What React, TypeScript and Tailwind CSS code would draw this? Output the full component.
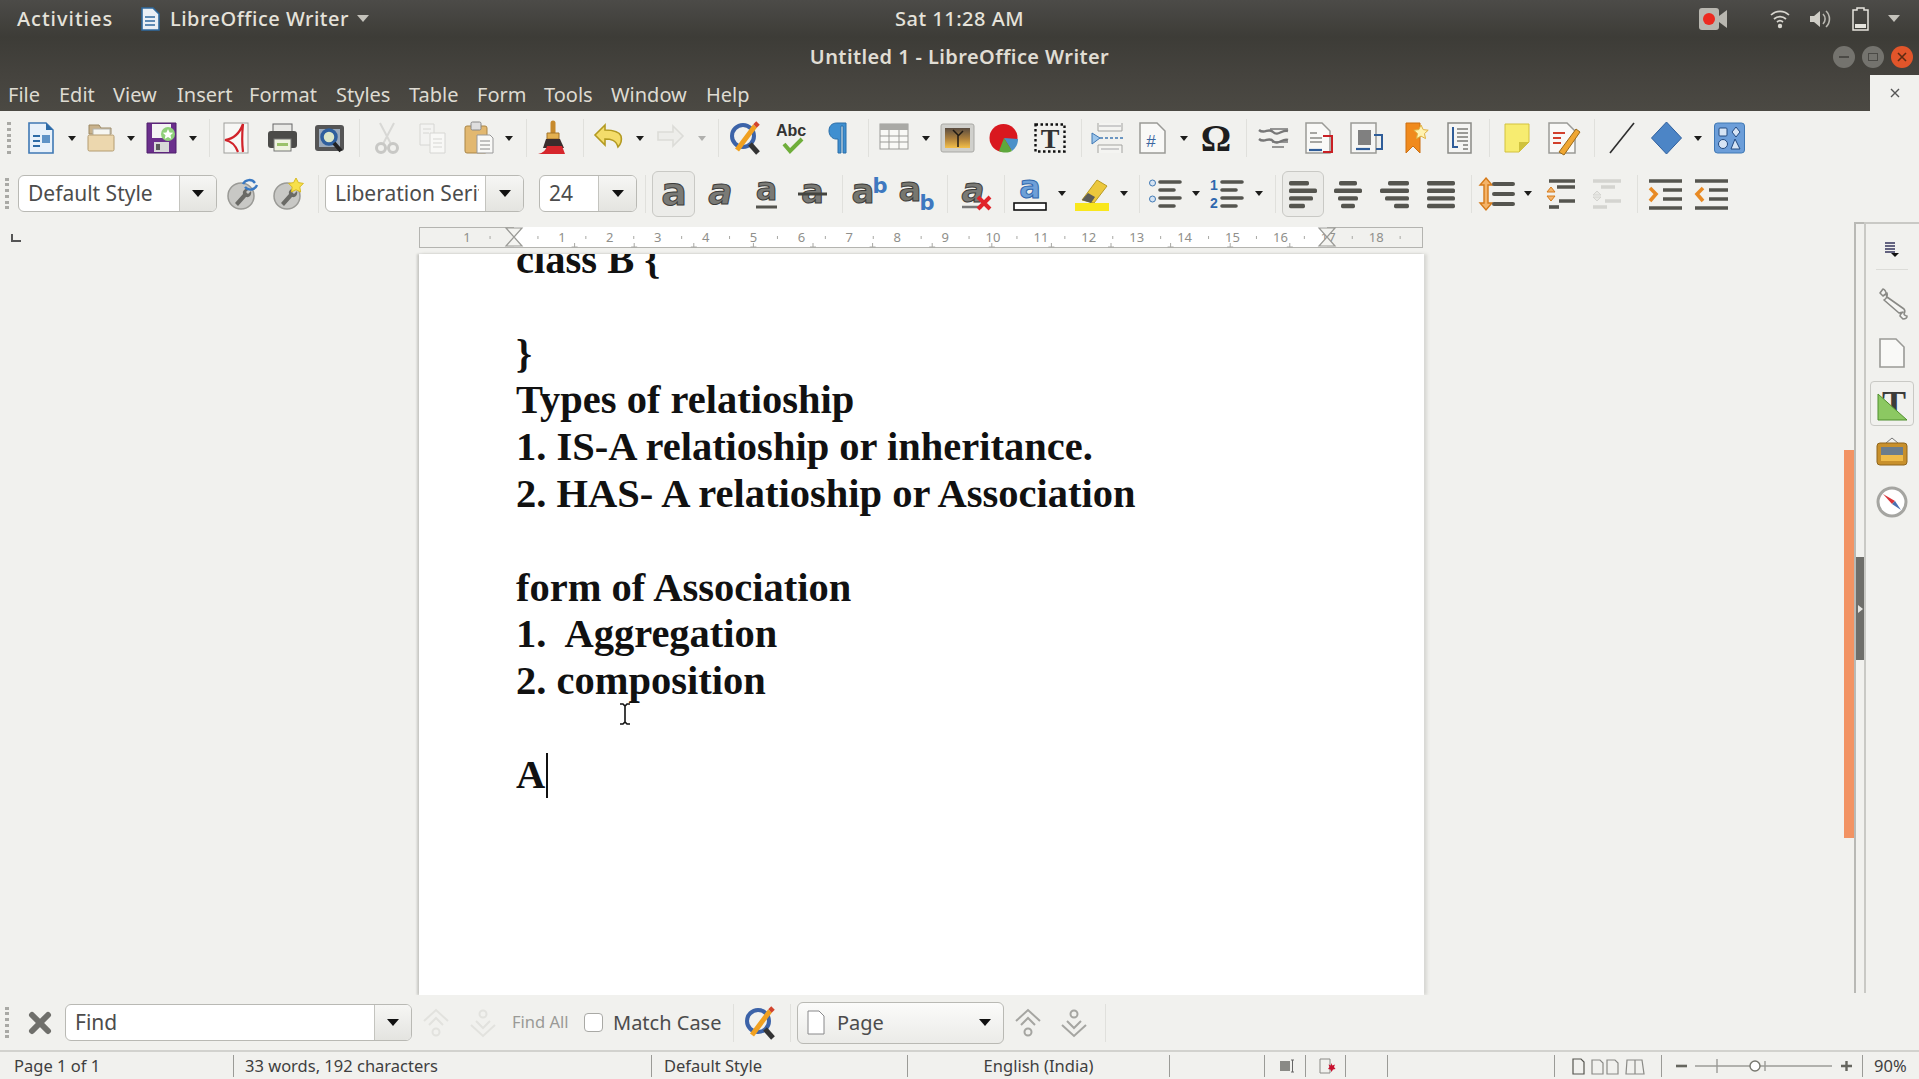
import React from 'react';

type P = { className?: string };

const Arrow = ({ className = '' }: P) => (
  <svg viewBox="0 0 8 5" className={`shrink-0 w-[8px] h-[5px] ${className}`}>
    <path d="M0 0h8L4 5z" fill="#1d1d1b" />
  </svg>
);

const Sep = ({ className = '' }: P) => <div className={`shrink-0 w-px h-[38px] bg-[#e0e0dc] ${className}`} />;

const Grip = ({ className = '' }: P) => (
  <div className={`shrink-0 w-[4px] h-[32px] flex flex-col justify-between ${className}`}>
    {[0, 1, 2, 3, 4, 5].map((i) => (
      <div key={i} className="h-[3px] w-[4px] bg-[#a9a9a5]" />
    ))}
  </div>
);

const Combo = ({ text, className = '', split }: { text: string; className?: string; split: string }) => (
  <div className={`shrink-0 h-[37px] flex rounded-[6px] border border-[#b9b9b4] bg-white overflow-hidden ${className}`}>
    <div className="flex-1 min-w-0 ml-[9px] mr-[6px] text-[21px] leading-[35px] text-[#4c4c4c] overflow-hidden whitespace-nowrap">{text}</div>
    <div className={`${split} shrink-0 flex items-center justify-center border-l border-[#c4c4bf] bg-gradient-to-b from-[#f6f6f4] to-[#e4e4e0]`}>
      <svg viewBox="0 0 12 7" className="w-[12px] h-[7px]"><path d="M0 0h12L6 7z" fill="#111" /></svg>
    </div>
  </div>
);

const Lines = ({ w, rows, dim }: { w: number; rows: [number, number][]; dim?: boolean }) => (
  <svg viewBox={`0 0 ${w} 32`} className="shrink-0 h-[32px]" width={w}>
    {rows.map(([x, l], i) => (
      <rect key={i} x={x} y={3 + i * 7.6} width={l} height={4.4} rx={1.6} fill={dim ? '#cfcfcb' : '#55554f'} />
    ))}
  </svg>
);

const LetterA = ({ w, italic, size = 32, y = 24 }: { w: number; italic?: boolean; size?: number; y?: number }) => (
  <text x={w / 2} y={y} textAnchor="middle" fontFamily="'DejaVu Sans', sans-serif" fontWeight="700" fontSize={size} fontStyle={italic ? 'italic' : 'normal'} fill="#7a7a76" stroke="#3c3c3a" strokeWidth="1">a</text>
);

const Svg = ({ w, className = '', children }: { w: number; className?: string; children: React.ReactNode }) => (
  <svg viewBox={`0 0 ${w} 34`} width={w} height={34} className={`shrink-0 overflow-visible ${className}`}>{children}</svg>
);

const FindGlass = ({ className = '' }: P) => (
  <Svg w={33} className={className}>
    <circle cx="14" cy="15" r="11" fill="none" stroke="#3c63a8" strokeWidth="4" />
    <path d="M21 23l8 9" stroke="#333" strokeWidth="5" />
    <path d="M8 29L26 5" stroke="#f0a020" strokeWidth="5" />
    <path d="M26 5l3-3" stroke="#d2442c" strokeWidth="5" />
  </Svg>
);

const DocBase = ({ w = 30 }: { w?: number }) => (
  <path d={`M2 2h${w - 10}l8 8v22H2z`} fill="#f9f9f7" stroke="#9a9a96" strokeWidth="1.5" />
);

const UpDouble = ({ down, dim, className = '' }: { down?: boolean; dim?: boolean; className?: string }) => (
  <svg viewBox="0 0 28 30" width={28} height={30} className={`shrink-0 ${className}`}>
    <g fill="none" stroke={dim ? '#e2e2de' : '#a5a5a1'} strokeWidth="2" transform={down ? 'rotate(180 14 15)' : undefined}>
      <path d="M2 13L14 2l12 11" />
      <path d="M7 17l7-7 7 7" />
      <circle cx="14" cy="24" r="3.5" />
    </g>
  </svg>
);

const menus: [string, string][] = [
  ['File', 'w-[51px]'],
  ['Edit', 'w-[54px]'],
  ['View', 'w-[64px]'],
  ['Insert', 'w-[72px]'],
  ['Format', 'w-[87px]'],
  ['Styles', 'w-[73px]'],
  ['Table', 'w-[68px]'],
  ['Form', 'w-[67px]'],
  ['Tools', 'w-[67px]'],
  ['Window', 'w-[95px]'],
  ['Help', 'w-[50px]'],
];

const docLines = [
  'class B {',
  '',
  '}',
  'Types of relatioship',
  '1. IS-A relatioship or inheritance.',
  '2. HAS- A relatioship or Association',
  '',
  'form of Association',
  '1.  Aggregation',
  '2. composition',
  '',
];

const Ruler = () => {
  const nums: number[] = [];
  for (let i = 1; i <= 18; i++) nums.push(i);
  const zero = 95;
  return (
    <svg viewBox="0 0 1004 21" width={1004} height={21} className="block">
      <rect x="0.5" y="0.5" width="1003" height="20" fill="#f1f1ee" stroke="#b4b4b0" />
      <rect x={zero} y="0" width="813" height="20" fill="#fff" />
      <g fontFamily="'Noto Sans', sans-serif" fontSize="13" fill="#8f8f8b" textAnchor="middle">
        <text x={zero - 47} y="15">1</text>
        {nums.map((n) => (
          <text key={n} x={zero + n * 47.9} y="15">{n}</text>
        ))}
      </g>
      <g stroke="#a8a8a4">
        {[-1, 0, ...nums].map((n) => (
          <path key={n} d={`M${zero + (n + 0.5) * 47.9} 9v3`} />
        ))}
        {[1, 2, 3, 4, 5, 6, 7, 8, 9, 10, 11, 12, 13].map((n) => (
          <path key={n} d={`M${zero + n * 59.6 + 1} 16v4M${zero + n * 59.6 - 2} 20h6`} />
        ))}
      </g>
      <path d={`M${zero - 8} 1h16l-8 9 8 9h-16l8-9z`} fill="#f4f4f1" stroke="#9a9a96" strokeWidth="1.2" />
      <path d={`M${zero + 813 - 8} 1h16l-8 9 8 9h-16l8-9z`} fill="#f4f4f1" stroke="#9a9a96" strokeWidth="1.2" />
    </svg>
  );
};

const Toolbar1 = () => (
  <div className="h-[54px] flex items-center bg-[#f1f1ee]">
    <Grip className="ml-[7px]" />
    <Svg w={26} className="ml-[17px]">
      <path d="M1 2h17l7 7v23H1z" fill="#e8f1fa" stroke="#3f78b4" strokeWidth="1.6" />
      <path d="M18 2l7 7h-7z" fill="#2d6ba6" />
      <path d="M5 14h7v2H5zM5 19h7v2H5zM5 24h7v2H5z" fill="#2d6ba6" />
      <rect x="14" y="14" width="8" height="8" fill="#5f93c7" />
    </Svg>
    <Arrow className="ml-[14px]" />
    <Svg w={28} className="ml-[11px]">
      <path d="M2 8V4h10l2 3h10v6H2z" fill="#c8b28c" stroke="#9c8862" />
      <rect x="6" y="8" width="17" height="10" fill="#f6f6f2" stroke="#b5b5ae" />
      <rect x="1" y="14" width="26" height="16" rx="1.5" fill="#ecd7ae" stroke="#b49c70" />
    </Svg>
    <Arrow className="ml-[12px]" />
    <Svg w={31} className="ml-[11px]">
      <path d="M1 2h29v30H1z" fill="#6b2f8c" stroke="#4f1f6b" />
      <rect x="6" y="3" width="19" height="14" fill="#f4f4f4" />
      <rect x="8" y="21" width="15" height="10" fill="#d8d8d8" />
      <rect x="10" y="23" width="4" height="6" fill="#5a5a5a" />
      <circle cx="22" cy="13" r="7" fill="#8fd07a" />
      <path d="M22 8l1.6 3.4 3.6.4-2.7 2.5.8 3.7-3.3-1.9-3.3 1.9.8-3.7-2.7-2.5 3.6-.4z" fill="#fff" />
    </Svg>
    <Arrow className="ml-[12px]" />
    <Sep className="ml-[12px]" />
    <Svg w={26} className="ml-[13px]">
      <rect x="1" y="2" width="24" height="30" fill="#f7f7f5" stroke="#a0a09c" />
      <path d="M20 3C16 14 10 18 2 19c6 1 10 4 13 12M20 3c-1 10-1 20 0 28" fill="none" stroke="#d1232a" strokeWidth="2.2" />
    </Svg>
    <Svg w={31} className="ml-[18px]">
      <rect x="6" y="3" width="19" height="10" fill="#e9e9e6" stroke="#666" />
      <rect x="1" y="10" width="29" height="17" rx="3" fill="#4b4b49" />
      <rect x="7" y="18" width="17" height="12" fill="#eef3e0" stroke="#777" />
      <rect x="10" y="22" width="11" height="3" fill="#9ac26a" />
    </Svg>
    <Svg w={31} className="ml-[16px]">
      <rect x="1" y="4" width="29" height="26" rx="3" fill="#555" />
      <rect x="5" y="8" width="21" height="18" fill="#9aa9ba" />
      <circle cx="15" cy="16" r="7" fill="#dce6c8" stroke="#2e5f9e" strokeWidth="3.5" />
      <path d="M20 22l7 8" stroke="#222" strokeWidth="4" />
    </Svg>
    <Sep className="ml-[14px]" />
    <Svg w={24} className="ml-[15px]">
      <path d="M5 2l11 21M19 2L8 23" stroke="#d8d8d5" strokeWidth="2" />
      <circle cx="6" cy="27" r="4.5" fill="none" stroke="#c8c8c5" strokeWidth="3" />
      <circle cx="18" cy="27" r="4.5" fill="none" stroke="#c8c8c5" strokeWidth="3" />
    </Svg>
    <Svg w={29} className="ml-[19px]">
      <path d="M2 3h14v21H2z" fill="#f3f3f1" stroke="#d6d6d3" />
      <path d="M12 12h15v20H12z" fill="#f8f8f6" stroke="#d6d6d3" />
      <path d="M5 8h8M5 12h6M15 18h9M15 22h9M15 26h9" stroke="#d6d6d3" />
    </Svg>
    <Svg w={30} className="ml-[17px]">
      <rect x="1" y="5" width="22" height="27" rx="2" fill="#e2b870" stroke="#a98546" />
      <rect x="7" y="1" width="10" height="8" rx="1.5" fill="#dedede" stroke="#888" />
      <path d="M13 14h13l3 3v15H13z" fill="#f9f9f7" stroke="#999" />
      <path d="M16 20h10M16 24h10M16 28h10" stroke="#888" />
    </Svg>
    <Arrow className="ml-[11px]" />
    <Sep className="ml-[13px]" />
    <Svg w={29} className="ml-[11px]">
      <path d="M15 2v10" stroke="#c78a2c" strokeWidth="5" strokeLinecap="round" />
      <path d="M9 12h12v6H9z" fill="#e3b050" stroke="#a3752a" />
      <path d="M8 18h14l4 9H5z" fill="#3a2c2c" />
      <path d="M0 33c5-1 8-4 9-8h15l3 8z" fill="#d6262c" />
    </Svg>
    <Sep className="ml-[16px]" />
    <Svg w={30} className="ml-[10px]">
      <path d="M11 4L1 14l10 10v-6c6 0 11 1 13 8 3-3 4-7 3-11-2-5-8-6-16-6z" fill="#f4dc6a" stroke="#b39a22" strokeWidth="1.6" />
    </Svg>
    <Arrow className="ml-[12px]" />
    <Svg w={31} className="ml-[10px]">
      <path d="M19 5l10 10-10 10v-6H4v-8h15z" fill="#ededea" stroke="#dcdcd8" strokeWidth="1.6" />
    </Svg>
    <Arrow className="ml-[13px] opacity-30" />
    <Sep className="ml-[12px]" />
    <FindGlass className="ml-[10px]" />
    <Svg w={31} className="ml-[14px]">
      <text x="15" y="15" textAnchor="middle" fontFamily="'Liberation Sans', sans-serif" fontWeight="700" fontSize="16" fill="#333">Abc</text>
      <path d="M8 23l6 7L26 18" fill="none" stroke="#6fae3a" strokeWidth="4" />
    </Svg>
    <svg viewBox="0 0 20 34" width={20} height={34} className="ml-[21px] shrink-0">
      <path d="M18 2H9C3 2 1 6 1 10s3 8 7 8h2v14h3V5h2v27h3z" fill="#3f8fd0" stroke="#2a6ea8" />
    </svg>
    <Sep className="ml-[20px]" />
    <Svg w={30} className="ml-[10px]">
      <rect x="1" y="3" width="28" height="25" fill="#f9f9f6" stroke="#9b9b97" />
      <rect x="1" y="3" width="28" height="6" fill="#a9a9a5" />
      <path d="M1 15h28M1 21h28M10 9v19M20 9v19" stroke="#9b9b97" />
    </Svg>
    <Arrow className="ml-[13px]" />
    <Svg w={35} className="ml-[10px]">
      <defs>
        <linearGradient id="sunset" x1="0" y1="0" x2="0" y2="1">
          <stop offset="0" stopColor="#5a4c40" />
          <stop offset="0.55" stopColor="#b0823c" />
          <stop offset="1" stopColor="#f4c04a" />
        </linearGradient>
      </defs>
      <rect x="1" y="3" width="33" height="28" rx="2" fill="#d0d0cc" stroke="#a9a9a5" />
      <rect x="5" y="7" width="25" height="20" fill="url(#sunset)" />
      <path d="M18 26V14l-5-5M18 15l5-5" stroke="#1f1a14" strokeWidth="1.5" fill="none" />
    </Svg>
    <Svg w={29} className="ml-[14px]">
      <circle cx="14.5" cy="17" r="14" fill="#d9181f" />
      <path d="M15 17l14 1c0 5-2 9-6 12z" fill="#4a90c9" />
      <path d="M15 17l8 13c-4 2-9 2-13 0z" fill="#5ea83c" />
    </Svg>
    <Svg w={32} className="ml-[16px]">
      <rect x="1.5" y="3.5" width="29" height="27" fill="none" stroke="#111" strokeWidth="2.4" strokeDasharray="2.5 2.5" />
      <text x="16" y="27" textAnchor="middle" fontFamily="'Liberation Serif', serif" fontWeight="700" fontSize="28" fill="#333">T</text>
    </Svg>
    <Sep className="ml-[15px]" />
    <Svg w={34} className="ml-[8px]">
      <path d="M8 2v8h24V2M8 32v-8h24v8" fill="#f4f4f1" stroke="#a3a3a0" />
      <path d="M9 5h22M11 28h18" stroke="#ccc" strokeWidth="2" />
      <path d="M2 12l8 5-8 6z" fill="#9cc5ea" stroke="#3f78b4" />
      <path d="M10 17h24" stroke="#3f78b4" strokeWidth="1.6" strokeDasharray="3 2" />
    </Svg>
    <Svg w={28} className="ml-[14px]">
      <DocBase w={27} />
      <text x="13" y="26" textAnchor="middle" fontFamily="'Liberation Sans', sans-serif" fontSize="17" fill="#3b66a0">#</text>
    </Svg>
    <Arrow className="ml-[14px]" />
    <Svg w={30} className="ml-[13px]">
      <text x="15" y="30" textAnchor="middle" fontFamily="'Liberation Serif', serif" fontWeight="700" fontSize="38" fill="#1e1e1e">Ω</text>
    </Svg>
    <Sep className="ml-[15px]" />
    <Svg w={31} className="ml-[11px]">
      <path d="M1 9c6 5 9-3 14 2s9-3 15-1M1 18c6 5 9-3 14 2s9-3 15-1" fill="none" stroke="#777" strokeWidth="2.4" />
      <path d="M12 8h18M14 21h16M14 26h12" stroke="#777" strokeWidth="1.5" />
    </Svg>
    <Svg w={31} className="ml-[15px]">
      <DocBase w={26} />
      <path d="M6 12h7M6 17h12M6 21h12" stroke="#8a8a86" strokeWidth="1.4" />
      <path d="M5 29h13" stroke="#2f5d99" strokeWidth="2.2" />
      <path d="M19 15h9v16h-9" fill="none" stroke="#c92024" strokeWidth="2" />
    </Svg>
    <Svg w={33} className="ml-[15px]">
      <rect x="1" y="2" width="25" height="30" fill="#f6f6f4" stroke="#9a9a96" strokeWidth="1.5" />
      <rect x="8" y="9" width="13" height="15" fill="#808080" />
      <path d="M6 28h14" stroke="#2f5d99" strokeWidth="2.2" />
      <path d="M24 14h8v14h-6" fill="none" stroke="#2f5d99" strokeWidth="2" />
    </Svg>
    <Svg w={24} className="ml-[21px]">
      <path d="M2 2h14v30l-7-7-7 7z" fill="#f08a1c" stroke="#cc6f10" />
      <path d="M17 4l2.2 4.6 5 .6-3.7 3.4 1 5-4.5-2.5-4.5 2.5 1-5-3.7-3.4 5-.6z" fill="#fff2b0" stroke="#e0b040" />
    </Svg>
    <Svg w={25} className="ml-[19px]">
      <rect x="1" y="2" width="23" height="30" fill="#f5f5f3" stroke="#8a8a86" strokeWidth="1.5" />
      <path d="M10 8h11M10 12h11M10 16h11M10 20h11M16 24h5M16 28h5" stroke="#7c7c78" strokeWidth="1.4" />
      <path d="M6 6v20h5" fill="none" stroke="#2f5d99" strokeWidth="2" />
    </Svg>
    <Sep className="ml-[17px]" />
    <Svg w={26} className="ml-[14px]">
      <path d="M1 3h24v18l-10 10H1z" fill="#f7ec70" stroke="#d3c23e" />
      <path d="M25 21H15v10z" fill="#cfc23e" />
    </Svg>
    <Svg w={33} className="ml-[17px]">
      <DocBase w={28} />
      <path d="M6 12h12M6 17h8M6 22h8" stroke="#d2402c" strokeWidth="1.8" />
      <path d="M12 31L29 8l4 3-16 23z" fill="#f0a732" stroke="#9a6a1a" />
    </Svg>
    <Sep className="ml-[14px]" />
    <Svg w={25} className="ml-[14px]">
      <path d="M1 32L25 2" stroke="#2c2c2c" strokeWidth="1.6" />
    </Svg>
    <Svg w={31} className="ml-[17px]">
      <path d="M15.5 1L30.5 17 15.5 33 .5 17z" fill="#4c85c6" stroke="#2e5f9e" />
    </Svg>
    <Arrow className="ml-[12px]" />
    <Svg w={31} className="ml-[12px]">
      <rect x="0.5" y="2" width="30" height="30" rx="3" fill="#6c9ed9" stroke="#3f78b4" />
      <rect x="5" y="7" width="8" height="8" rx="1" fill="#d6e4f4" stroke="#234a80" />
      <path d="M22 6l4 5-4 5-4-5z" fill="#d6e4f4" stroke="#234a80" />
      <circle cx="9" cy="23" r="4.5" fill="#d6e4f4" stroke="#234a80" />
      <path d="M21 18l5 10h-9z" fill="#d6e4f4" stroke="#234a80" />
    </Svg>
  </div>
);

const Toolbar2 = () => (
  <div className="h-[57px] flex items-center bg-[#f1f1ee]">
    <Grip className="ml-[5px]" />
    <Combo text="Default Style" className="ml-[9px] w-[199px]" split="w-[37px]" />
    <Svg w={33} className="ml-[9px]">
      <circle cx="15" cy="19" r="13" fill="#c8c8c5" stroke="#9a9a96" strokeWidth="1.5" />
      <path d="M9 26l8-9c-1-4 3-6 6-5l-3 3 2 2 3-3c1 3-1 7-5 6l-8 9z" fill="#6a6a66" />
      <path d="M17 7a7 7 0 0 1 12-1M31 8a7 7 0 0 1-12 2" fill="none" stroke="#3a79c2" strokeWidth="2.4" />
    </Svg>
    <Svg w={31} className="ml-[14px]">
      <circle cx="14" cy="19" r="13" fill="#c8c8c5" stroke="#9a9a96" strokeWidth="1.5" />
      <path d="M8 26l8-9c-1-4 3-6 6-5l-3 3 2 2 3-3c1 3-1 7-5 6l-8 9z" fill="#6a6a66" />
      <path d="M23 1l2.4 4.6 5 .8-3.6 3.6.8 5-4.6-2.3-4.6 2.3.8-5-3.6-3.6 5-.8z" fill="#f7e04a" stroke="#d9bb22" />
    </Svg>
    <Sep className="ml-[14px]" />
    <Combo text="Liberation Serif" className="ml-[6px] w-[199px]" split="w-[38px]" />
    <Combo text="24" className="ml-[15px] w-[98px]" split="w-[38px]" />
    <Sep className="ml-[8px]" />
    <div className="ml-[6px] shrink-0 w-[43px] h-[46px] flex items-center justify-center rounded-[6px] border border-[#c9c9c5] bg-[#ecece9]">
      <Svg w={28}><LetterA w={28} size={38} y={28} /></Svg>
    </div>
    <Svg w={23} className="ml-[14px]"><LetterA w={23} italic size={36} y={27} /></Svg>
    <Svg w={23} className="ml-[23px]">
      <LetterA w={23} size={32} y={23} />
      <path d="M1 30h21" stroke="#55554f" strokeWidth="3" />
    </Svg>
    <Svg w={29} className="ml-[20px]">
      <LetterA w={29} size={34} y={26} />
      <path d="M0 17h29" stroke="#44443f" strokeWidth="3" />
    </Svg>
    <Sep className="ml-[15px]" />
    <Svg w={34} className="ml-[9px]">
      <text x="11" y="26" textAnchor="middle" fontFamily="'DejaVu Sans', sans-serif" fontWeight="700" fontSize="34" fill="#77776f" stroke="#3c3c3a">a</text>
      <text x="28" y="16" textAnchor="middle" fontFamily="'DejaVu Sans', sans-serif" fontWeight="700" fontSize="21" fill="#3e78c0">b</text>
    </Svg>
    <Svg w={34} className="ml-[13px]">
      <text x="11" y="24" textAnchor="middle" fontFamily="'DejaVu Sans', sans-serif" fontWeight="700" fontSize="34" fill="#77776f" stroke="#3c3c3a">a</text>
      <text x="28" y="33" textAnchor="middle" fontFamily="'DejaVu Sans', sans-serif" fontWeight="700" fontSize="21" fill="#3e78c0">b</text>
    </Svg>
    <Sep className="ml-[14px]" />
    <Svg w={31} className="ml-[13px]">
      <LetterA w={24} italic size={34} y={25} />
      <path d="M1 30h20" stroke="#777" strokeWidth="2.5" />
      <path d="M17 20l12 12M29 20L17 32" stroke="#e0242a" strokeWidth="4" />
    </Svg>
    <Sep className="ml-[12px]" />
    <Svg w={34} className="ml-[8px]">
      <text x="17" y="21" textAnchor="middle" fontFamily="'DejaVu Sans', sans-serif" fontWeight="700" fontSize="32" fill="#6ea0d8" stroke="#2f67ad">a</text>
      <rect x="1" y="26" width="32" height="7" fill="#fff" stroke="#111" strokeWidth="1.6" />
    </Svg>
    <Arrow className="ml-[11px]" />
    <Svg w={34} className="ml-[9px]">
      <path d="M7 23L22 3l10 6-13 17z" fill="#ecc83c" stroke="#b99b22" />
      <path d="M7 23l6-7 7 4-4 6z" fill="#5c5c58" />
      <rect x="0" y="26" width="34" height="8" fill="#f9e71c" />
    </Svg>
    <Arrow className="ml-[11px]" />
    <Sep className="ml-[11px]" />
    <Svg w={32} className="ml-[9px]">
      <circle cx="3.5" cy="6" r="3" fill="#d5e3f2" stroke="#3f78b4" />
      <circle cx="3.5" cy="22" r="3" fill="#d5e3f2" stroke="#3f78b4" />
      <path d="M11 5h20M11 13h14M11 21h20M11 29h14" stroke="#55554f" strokeWidth="3.6" strokeLinecap="round" />
    </Svg>
    <Arrow className="ml-[11px]" />
    <Svg w={32} className="ml-[11px]">
      <text x="3" y="13" textAnchor="middle" fontFamily="'Liberation Sans', sans-serif" fontWeight="700" fontSize="14" fill="#2f67ad">1</text>
      <text x="3" y="31" textAnchor="middle" fontFamily="'Liberation Sans', sans-serif" fontWeight="700" fontSize="14" fill="#2f67ad">2</text>
      <path d="M11 5h20M11 13h14M11 21h20M11 29h14" stroke="#55554f" strokeWidth="3.6" strokeLinecap="round" />
    </Svg>
    <Arrow className="ml-[12px]" />
    <Sep className="ml-[12px]" />
    <div className="ml-[6px] shrink-0 w-[42px] h-[46px] flex items-center justify-center rounded-[6px] border border-[#c9c9c5] bg-[#ecece9]">
      <Lines w={28} rows={[[0, 20], [0, 28], [0, 24], [0, 16]]} />
    </div>
    <div className="ml-[10px]"><Lines w={28} rows={[[5, 18], [0, 28], [4, 20], [7, 14]]} /></div>
    <div className="ml-[18px]"><Lines w={29} rows={[[8, 21], [0, 29], [5, 24], [14, 15]]} /></div>
    <div className="ml-[18px]"><Lines w={28} rows={[[0, 28], [0, 28], [0, 28], [0, 28]]} /></div>
    <Sep className="ml-[16px]" />
    <Svg w={33} className="ml-[8px]">
      <path d="M6 1l6 7H8v18h4l-6 7-6-7h4V8H0z" fill="#f5b469" stroke="#d57a1a" strokeWidth="1.4" />
      <path d="M14 7h19M14 17h19M14 27h19" stroke="#55554f" strokeWidth="4" strokeLinecap="round" />
    </Svg>
    <Arrow className="ml-[11px]" />
    <Svg w={28} className="ml-[15px]">
      <path d="M2 4h26M10 10h18M12 24h16" stroke="#55554f" strokeWidth="3.6" />
      <path d="M4 10l4 5H0zM4 24l4-5H0z" fill="#f5b469" stroke="#d57a1a" />
      <path d="M2 30h10" stroke="#55554f" strokeWidth="3.6" />
    </Svg>
    <Svg w={28} className="ml-[18px]">
      <path d="M0 4h28M8 10h14M12 24h16M0 30h14" stroke="#d4d4d0" strokeWidth="3.6" />
      <path d="M4 14l4 4H0zM4 24l4-4H0z" fill="#e8e8e4" stroke="#d4d4d0" />
    </Svg>
    <Sep className="ml-[16px]" />
    <Svg w={33} className="ml-[11px]">
      <path d="M0 4h33M14 13h19M14 22h19M0 31h33" stroke="#55554f" strokeWidth="3.6" />
      <path d="M1 11l6 6-6 7" fill="none" stroke="#e88a24" strokeWidth="3.6" />
    </Svg>
    <Svg w={33} className="ml-[13px]">
      <path d="M0 4h33M14 13h19M14 22h19M0 31h33" stroke="#55554f" strokeWidth="3.6" />
      <path d="M8 11l-6 6 6 7" fill="none" stroke="#e88a24" strokeWidth="3.6" />
    </Svg>
  </div>
);

const FindBar = () => (
  <div className="h-[55px] flex items-center bg-[#f1f1ee] text-[#4c4c4c]">
    <Grip className="ml-[5px]" />
    <svg viewBox="0 0 24 24" width={24} height={24} className="ml-[19px] shrink-0">
      <path d="M4 4l16 16M20 4L4 20" stroke="#6f6f6b" strokeWidth="6" strokeLinecap="round" />
    </svg>
    <Combo text="Find" className="ml-[13px] w-[347px]" split="w-[37px]" />
    <UpDouble dim className="ml-[10px]" />
    <UpDouble dim down className="ml-[19px]" />
    <span className="ml-[15px] w-[56px] text-[16.5px] text-[#9a9a96] whitespace-nowrap">Find All</span>
    <div className="ml-[16px] shrink-0 w-[19px] h-[19px] rounded-[4px] border border-[#a9a9a5] bg-white" />
    <span className="ml-[10px] w-[110px] text-[20px] whitespace-nowrap">Match Case</span>
    <Sep className="ml-[10px]" />
    <FindGlass className="ml-[10px]" />
    <Sep className="ml-[13px]" />
    <div className="ml-[6px] shrink-0 w-[207px] h-[42px] flex items-center rounded-[6px] border border-[#b9b9b4] bg-gradient-to-b from-[#fbfbfa] to-[#ebebe8]">
      <svg viewBox="0 0 18 25" width={18} height={25} className="ml-[9px] shrink-0">
        <path d="M1 1h11l5 5v18H1z" fill="#fff" stroke="#88888a" />
      </svg>
      <span className="ml-[12px] text-[20px]">Page</span>
      <svg viewBox="0 0 12 7" className="ml-auto mr-[12px] w-[12px] h-[7px]"><path d="M0 0h12L6 7z" fill="#111" /></svg>
    </div>
    <UpDouble className="ml-[10px]" />
    <UpDouble down className="ml-[18px]" />
    <Sep className="ml-[17px]" />
  </div>
);

const StatusDiv = ({ className = '' }: P) => <div className={`shrink-0 w-px h-[22px] bg-[#9b9b97] ${className}`} />;

const StatusBar = () => (
  <div className="h-[29px] flex items-center border-t-2 border-[#d2d2ce] bg-[#f1f1ee] text-[16.5px] text-[#3f3f3f] whitespace-nowrap">
    <span className="ml-[14px] w-[219px] pt-[1px]">Page 1 of 1</span>
    <StatusDiv />
    <span className="ml-[11px] w-[406px] pt-[1px]">33 words, 192 characters</span>
    <StatusDiv />
    <span className="ml-[12px] w-[243px] pt-[1px]">Default Style</span>
    <StatusDiv />
    <span className="w-[261px] text-center pt-[1px]">English (India)</span>
    <StatusDiv />
    <div className="w-[94px]" />
    <StatusDiv />
    <svg viewBox="0 0 40 16" width={40} height={16} className="shrink-0">
      <rect x="15" y="3" width="10" height="10" fill="#8a8a86" />
      <path d="M26 2h3M27.500 2v12M26 14h3" stroke="#666" />
    </svg>
    <StatusDiv />
    <svg viewBox="0 0 39 18" width={39} height={18} className="shrink-0">
      <path d="M14 2h10v14H14z" fill="none" stroke="#8a8a86" />
      <path d="M25 6l1.500 2.500 2.500-1-1 2.500 1.500 2-2.500.500-1.500 2.500-1-2.500-2.500-.500 1.500-2-1-2.500 2.500 1z" fill="#c8102e" />
    </svg>
    <StatusDiv />
    <div className="w-[41px]" />
    <StatusDiv />
    <div className="w-[166px]" />
    <StatusDiv />
    <svg viewBox="0 0 106 18" width={106} height={18} className="shrink-0">
      <g fill="none" stroke="#55554f" strokeWidth="1.2">
        <path d="M18 2h8l3 3v12H18z" />
      </g>
      <g fill="none" stroke="#8a8a86" strokeWidth="1.2">
        <path d="M37 3h8l3 3v11H37zM52 3h8l3 3v11H52zM72 3h8v14h-9zM80 3h7l2 14h-9z" />
      </g>
    </svg>
    <StatusDiv />
    <svg viewBox="0 0 200 18" width={200} height={18} className="shrink-0">
      <path d="M14 9h11" stroke="#66665f" strokeWidth="2.6" />
      <path d="M33 9h137" stroke="#9b9b97" strokeWidth="1.4" />
      <path d="M55 2v14M103 4v10" stroke="#9b9b97" strokeWidth="1.4" />
      <circle cx="93" cy="9" r="5" fill="#fff" stroke="#77776f" strokeWidth="1.4" />
      <path d="M179 9h11M184.500 4v10" stroke="#66665f" strokeWidth="2.4" />
    </svg>
    <StatusDiv />
    <span className="ml-[11px] pt-[1px]">90%</span>
  </div>
);

const Sidebar = () => (
  <div className="w-[65px] shrink-0 flex">
    <div className="w-[10px] flex flex-col border-l-2 border-t-2 border-[#b9b9b5] mb-[2px]">
      <div className="h-[333px]" />
      <div className="h-[103px] bg-[#6e6e6a] flex items-center justify-center">
        <svg viewBox="0 0 5 8" width={5} height={8}><path d="M0 0l5 4-5 4z" fill="#e6e6e2" /></svg>
      </div>
    </div>
    <div className="flex-1 flex flex-col items-center border-l-2 border-t-2 border-[#c9c9c5] mb-[2px] pr-[2px]">
      <svg viewBox="0 0 14 16" width={14} height={16} className="mt-[17px]">
        <path d="M0 2h10M0 5h10M0 8h10M0 11h10" stroke="#34345c" strokeWidth="1.4" />
        <path d="M6 12h8l-4 4z" fill="#111" />
      </svg>
      <div className="mt-[12px] w-[32px] h-px bg-[#dcdcd8]" />
      <svg viewBox="0 0 32 32" width={32} height={32} className="mt-[18px]">
        <g fill="#f5f5f3" stroke="#8a8a86" strokeWidth="1.6" strokeLinejoin="round">
          <path d="M7 1L4 5l3 3 4-3c1 3-1 6-3 7l15 13c1 0 3-1 4-1-1 1-3 2-3 4l3 3c2 0 4-1 4-3-1 0-3-1-3-2 1-2 1-4 0-5L11 9c-1-1 0-7-4-8z" />
        </g>
      </svg>
      <svg viewBox="0 0 26 30" width={26} height={30} className="mt-[18px]">
        <path d="M1 1h16l8 8v20H1z" fill="#f9f9f7" stroke="#9a9a96" strokeWidth="1.6" />
      </svg>
      <div className="mt-[13px] w-[44px] h-[45px] flex items-center justify-center rounded-[4px] border border-[#c9c9c5]">
        <svg viewBox="0 0 32 34" width={32} height={34} className="overflow-visible">
          <text x="18" y="29" textAnchor="middle" fontFamily="'Liberation Serif', serif" fontWeight="700" fontSize="36" fill="#3c3c3a">T</text>
          <path d="M2 7l29 26H2z" fill="#8cc862" stroke="#4f8f2c" />
        </svg>
      </div>
      <svg viewBox="0 0 32 30" width={32} height={30} className="mt-[11px]">
        <path d="M10 6l6-5 6 5" fill="none" stroke="#777" />
        <rect x="1" y="6" width="30" height="22" rx="3" fill="#c8902c" stroke="#8f651c" />
        <rect x="5" y="10" width="22" height="14" fill="#6b7c8c" />
        <rect x="5" y="18" width="22" height="6" fill="#efbb4a" />
      </svg>
      <svg viewBox="0 0 32 32" width={32} height={32} className="mt-[19px]">
        <circle cx="16" cy="16" r="14" fill="#fff" stroke="#a5a5a1" strokeWidth="3" />
        <path d="M7 8l12 7-3 3z" fill="#d9343a" />
        <path d="M25 24l-9-6 3-3z" fill="#4a6fb0" />
      </svg>
    </div>
  </div>
);

const App: React.FC = () => {
  return (
    <div className="w-[1919px] h-[1079px] flex flex-col overflow-hidden bg-[#f1f1ee] font-['Noto_Sans','Open_Sans',sans-serif] relative">
      <div className="h-[37px] flex items-center justify-between bg-gradient-to-b from-[#4c4b48] to-[#3d3c37] text-[#e5e2da] text-[20px] font-medium tracking-[0.5px]">
        <div className="flex items-center">
          <span className="ml-[17px] w-[124px] tracking-[1px]">Activities</span>
          <svg viewBox="0 0 19 24" width={19} height={24} className="shrink-0">
            <path d="M1 1h11l6 6v16H1z" fill="#e9eff5" stroke="#2f6a9e" strokeWidth="1.6" />
            <path d="M4 10h10M4 14h10M4 18h10" stroke="#2f6a9e" strokeWidth="1.5" />
          </svg>
          <span className="ml-[10px]">LibreOffice Writer</span>
          <svg viewBox="0 0 12 7" width={12} height={7} className="ml-[8px]"><path d="M0 0h12L6 7z" fill="#c4c2bb" /></svg>
        </div>
        <span className="absolute left-[895px]">Sat 11:28 AM</span>
        <div className="flex items-center">
          <svg viewBox="0 0 29 24" width={29} height={24} className="shrink-0">
            <rect x="0" y="1" width="20" height="22" rx="3" fill="#b9b7b0" />
            <path d="M20 9l8-6v18l-8-6z" fill="#b9b7b0" />
            <circle cx="10" cy="12" r="6" fill="#ec2a20" />
          </svg>
          <svg viewBox="0 0 20 20" width={20} height={20} className="ml-[42px] shrink-0">
            <path d="M1 6a13 13 0 0 1 18 0M4 10a9 9 0 0 1 12 0M7 13a4.500 4.500 0 0 1 6 0" fill="none" stroke="#d8d6cf" strokeWidth="1.7" />
            <circle cx="10" cy="17" r="2.200" fill="#d8d6cf" />
          </svg>
          <svg viewBox="0 0 22 20" width={22} height={20} className="ml-[19px] shrink-0">
            <path d="M1 7h4l6-5v16l-6-5H1z" fill="#cfcdc6" />
            <path d="M14 5a7 7 0 0 1 0 10M17 2a11 11 0 0 1 0 16" fill="none" stroke="#bab8b1" strokeWidth="1.6" />
          </svg>
          <svg viewBox="0 0 17 24" width={17} height={24} className="ml-[21px] shrink-0">
            <path d="M5 3V1h7v2h4v20H1V3z" fill="none" stroke="#e6e4dd" strokeWidth="1.5" />
            <rect x="3" y="17" width="11" height="4" fill="#e6e4dd" />
          </svg>
          <svg viewBox="0 0 12 7" width={12} height={7} className="ml-[19px] mr-[19px]"><path d="M0 0h12L6 7z" fill="#c4c2bb" /></svg>
        </div>
      </div>

      <div className="h-[38px] pt-[2px] flex items-center bg-gradient-to-b from-[#3d3c37] to-[#45433e] relative">
        <span className="w-full text-center text-[20px] font-semibold tracking-[0.4px] text-[#e0ddd4]">Untitled 1 - LibreOffice Writer</span>
        <div className="absolute right-[6px] top-[9px] flex gap-[7px]">
          <div className="w-[22px] h-[22px] rounded-full bg-[#74736e] flex items-center justify-center"><div className="w-[10px] h-[2px] bg-[#4b4a46]" /></div>
          <div className="w-[22px] h-[22px] rounded-full bg-[#74736e] flex items-center justify-center"><div className="w-[10px] h-[8px] border border-[#4b4a46]" /></div>
          <div className="w-[22px] h-[22px] rounded-full bg-[#e2552a] flex items-center justify-center">
            <svg viewBox="0 0 10 10" width={10} height={10}><path d="M1 1l8 8M9 1l-8 8" stroke="#5c2a12" strokeWidth="1.6" /></svg>
          </div>
        </div>
      </div>

      <div className="h-[36px] flex items-center bg-gradient-to-b from-[#45433e] to-[#4b4943] text-[#dedbd2] text-[20px]">
        <div className="ml-[8px] pt-[3px] flex">
          {menus.map(([label, w]) => (
            <span key={label} className={w}>{label}</span>
          ))}
        </div>
        <div className="ml-auto w-[49px] h-[36px] self-end bg-[#f1f1ee] flex items-center justify-center">
          <svg viewBox="0 0 10 10" width={10} height={10}><path d="M1 1l8 8M9 1l-8 8" stroke="#555" strokeWidth="1.400" /></svg>
        </div>
      </div>

      <Toolbar1 />
      <Toolbar2 />

      <div className="flex-1 min-h-0 flex">
        <div className="w-[1844px] shrink-0 flex flex-col">
          <div className="h-[32px] flex pt-[5px] shrink-0 relative">
            <svg viewBox="0 0 10 8" width={10} height={8} className="ml-[11px] mt-[7px] shrink-0">
              <path d="M1 0v7h9" fill="none" stroke="#555" strokeWidth="2" />
            </svg>
            <div className="ml-[398px]"><Ruler /></div>
          </div>
          <div className="flex-1 min-h-0 pl-[419px]">
            <div className="w-[1005px] h-full bg-white shadow-[-2px_0_2px_#c8c8c4,3px_0_3px_#d8d8d4] overflow-hidden pl-[97px]">
              <div className="-mt-[17px] font-['Liberation_Serif',serif] font-bold text-[40.5px] leading-[46.8px] text-[#111]">
                {docLines.map((line, i) => (
                  <div key={i} className="h-[46.8px] whitespace-pre">{line}</div>
                ))}
                <div className="h-[46.8px] flex items-center">
                  <span>A</span>
                  <span className="inline-block ml-[1px] w-[2px] h-[45px] bg-[#111]" />
                </div>
              </div>
            </div>
          </div>
        </div>
        <div className="w-[10px] shrink-0 flex flex-col">
          <div className="h-[228px]" />
          <div className="h-[388px] bg-[#f29363]" />
        </div>
        <Sidebar />
      </div>

      <FindBar />
      <StatusBar />

      <svg viewBox="0 0 12 22" width={12} height={22} className="absolute left-[619px] top-[703px]">
        <path d="M1 1h3l2 2 2-2h3M6 3v16M1 21h3l2-2 2 2h3" fill="none" stroke="#111" strokeWidth="1.600" />
      </svg>
    </div>
  );
};

export default App;
